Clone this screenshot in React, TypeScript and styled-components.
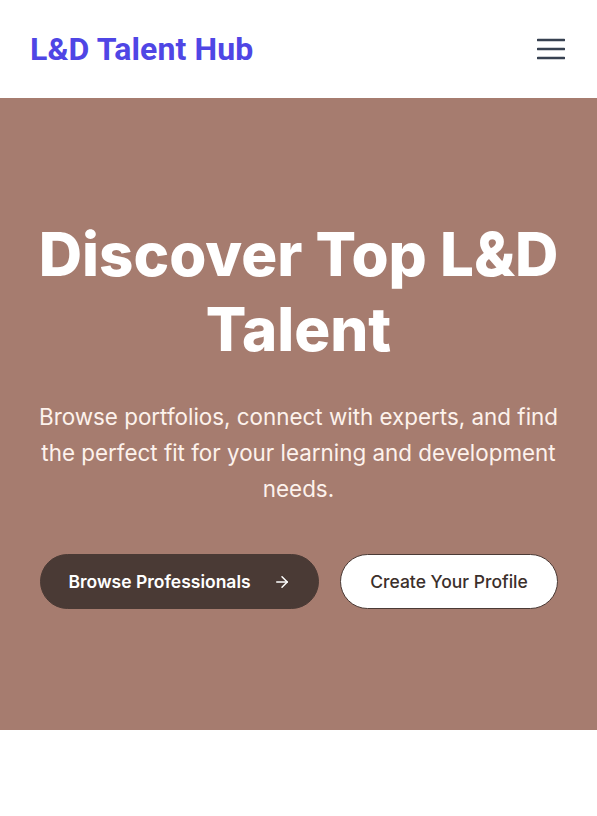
import React from "react";
import styled, { createGlobalStyle } from "styled-components";
import { ArrowRight } from "lucide-react";

const Global = createGlobalStyle`
  html, body { margin: 0; padding: 0; background: #ffffff; }
  body { font-family: Inter, "Noto Sans", sans-serif; -webkit-font-smoothing: antialiased; }
  * { box-sizing: border-box; }
`;

const Page = styled.div`
  min-height: 816px;
  background: #ffffff;
`;

const Header = styled.header`
  height: 98px;
  display: flex;
  align-items: center;
  justify-content: space-between;
  padding: 0 32px 0 30px;
  background: #ffffff;
`;

const Logo = styled.a`
  font-family: Roboto, "Liberation Sans", sans-serif;
  font-weight: 700;
  font-size: 32px;
  color: #4f46e5;
  text-decoration: none;
  letter-spacing: 0.1px;
`;

const MenuButton = styled.button`
  width: 28px;
  height: 24px;
  padding: 0;
  border: none;
  background: none;
  display: flex;
  align-items: center;
  justify-content: center;
  color: #374151;
`;

const Hero = styled.section`
  background: #a67c6f;
  padding: 119px 35px 121px;
  display: flex;
  flex-direction: column;
  align-items: center;
  text-align: center;
`;

const Title = styled.h1`
  margin: 0;
  font-size: 60px;
  line-height: 75px;
  font-weight: 800;
  color: #ffffff;
  letter-spacing: 0;
`;

const Lead = styled.p`
  margin: 32px 0 0;
  font-size: 22.4px;
  line-height: 36px;
  color: #fdf2ec;
  max-width: 527px;
`;

const Actions = styled.div`
  margin-top: 47px;
  display: flex;
  gap: 21px;
  width: 100%;
  padding: 0 5px;
`;

const Button = styled.a<{ $primary?: boolean }>`
  height: 55px;
  border-radius: 999px;
  display: inline-flex;
  align-items: center;
  justify-content: center;
  gap: 22px;
  font-size: 17.5px;
  font-weight: ${(p) => (p.$primary ? 600 : 500)};
  text-decoration: none;
  background: ${(p) => (p.$primary ? "#4a3a35" : "#ffffff")};
  color: ${(p) => (p.$primary ? "#ffffff" : "#3b2f2b")};
  border: 1px solid #4a3a35;
  flex: ${(p) => (p.$primary ? "0 0 279px" : "0 0 218px")};
`;

export default function App() {
  return (
    <Page>
      <Global />
      <Header>
        <Logo href="#">L&amp;D Talent Hub</Logo>
        <MenuButton aria-label="Menu">
          <svg width="28" height="24" viewBox="0 0 28 24" fill="none">
            <path d="M1 3h26M1 12h26M1 21h26" stroke="#374151" strokeWidth="2.6" strokeLinecap="round" />
          </svg>
        </MenuButton>
      </Header>
      <Hero>
        <Title>
          Discover Top L&amp;D
          <br />
          Talent
        </Title>
        <Lead>
          Browse portfolios, connect with experts, and find the perfect fit for your learning and development needs.
        </Lead>
        <Actions>
          <Button href="#" $primary>
            Browse Professionals
            <ArrowRight size={18} strokeWidth={2} />
          </Button>
          <Button href="#">Create Your Profile</Button>
        </Actions>
      </Hero>
    </Page>
  );
}
